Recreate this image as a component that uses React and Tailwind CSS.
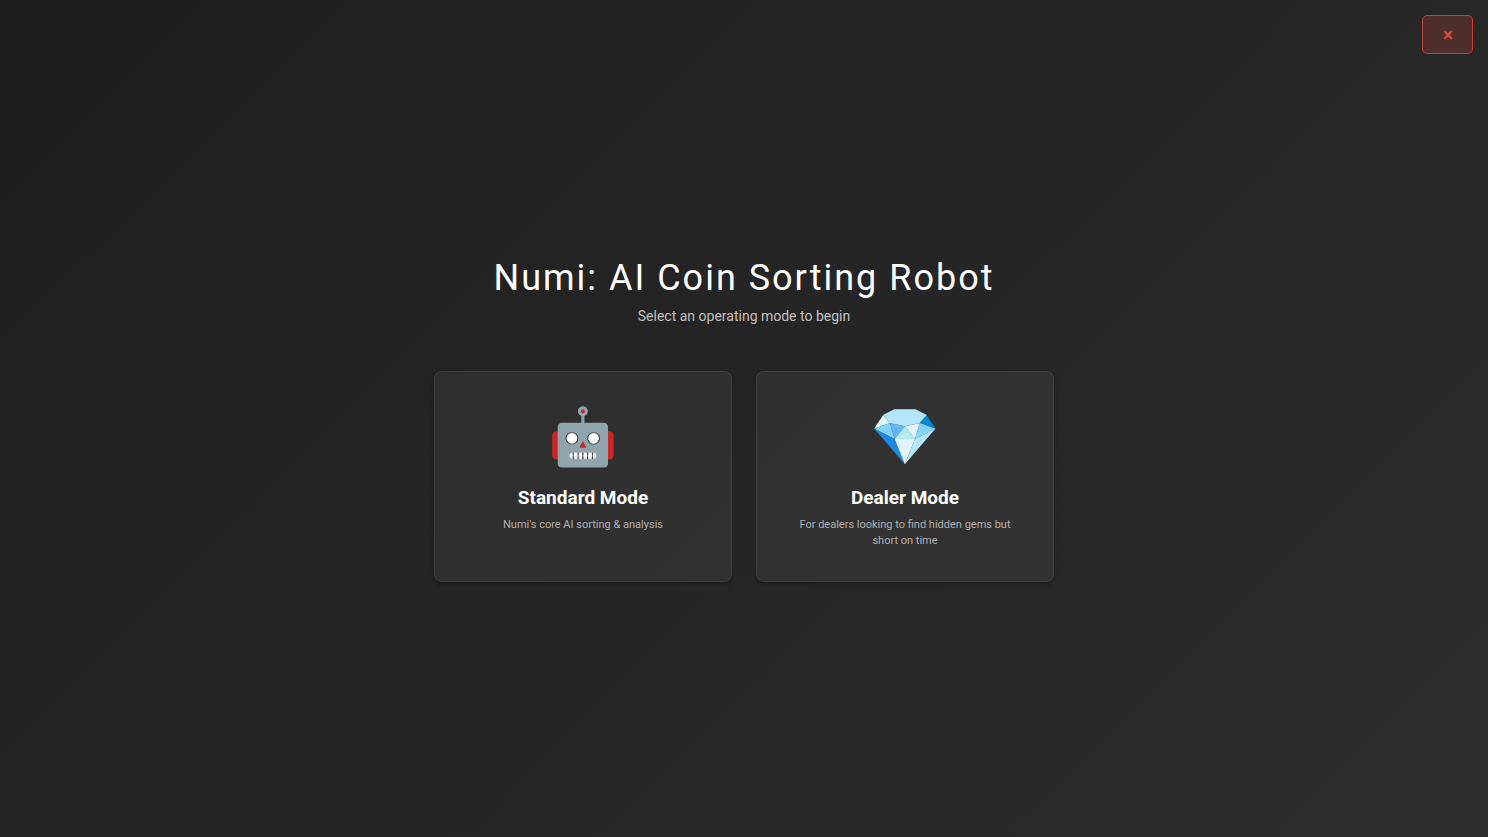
const modes = [
  { icon: "🤖", title: "Standard Mode", text: "Numi's core AI sorting & analysis" },
  { icon: "💎", title: "Dealer Mode", text: "For dealers looking to find hidden gems but short on time" },
];

function ModeCard({ icon, title, text }) {
  return (
    <button
      type="button"
      className="flex flex-col items-center rounded-lg border border-white/8 bg-white/5 px-10 py-8 text-center shadow-[0_2px_4px_rgba(0,0,0,0.3)]"
    >
      <span aria-hidden="true" className="mb-4 text-[56px] leading-[66px]">{icon}</span>
      <span className="mb-[7px] text-[19px] leading-6 font-bold text-white">{title}</span>
      <span className="text-[11px] leading-4 text-[#b0b0b0]">{text}</span>
    </button>
  );
}

export default function App() {
  return (
    <main className="relative flex min-h-screen flex-col items-center justify-center bg-linear-135 from-[#1e1e1e] to-[#2d2d2d] px-4 font-[Roboto,sans-serif]">
      <button
        type="button"
        aria-label="Close"
        className="absolute top-[15px] right-[15px] flex h-[39px] w-[51px] items-center justify-center rounded-[5px] border border-[#c83f36] bg-[#e74c3c]/20 text-sm font-bold text-[#e74c3c]"
      >
        ✕
      </button>
      <h1 className="text-[36px] leading-[44px] tracking-[2px] text-white">Numi: AI Coin Sorting Robot</h1>
      <p className="mt-1.5 mb-[45px] text-sm text-[#c0c0c0]">Select an operating mode to begin</p>
      <div className="grid w-full max-w-[620px] grid-cols-1 gap-6 sm:grid-cols-2">
        {modes.map((m) => <ModeCard key={m.title} {...m} />)}
      </div>
    </main>
  );
}
